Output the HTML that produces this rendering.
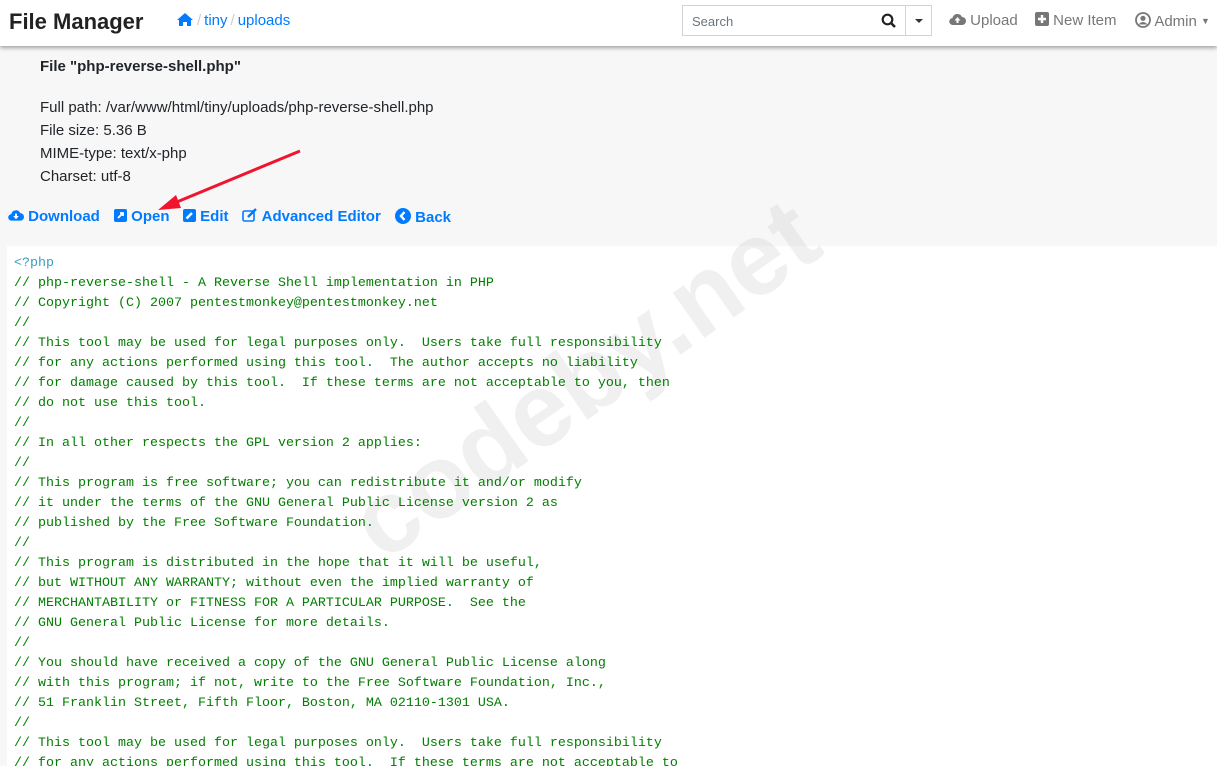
<!DOCTYPE html>
<html><head><meta charset="utf-8"><style>
*{margin:0;padding:0;box-sizing:border-box}
body{width:1217px;height:761px;overflow:hidden;background:#f7f7f7;font-family:"Liberation Sans",sans-serif;position:relative}
.nav{position:absolute;left:0;top:0;width:1217px;height:46px;background:#fff;box-shadow:0 2px 4px rgba(0,0,0,.35);z-index:3}
.brand{position:absolute;left:9px;top:9px;font-size:22px;font-weight:bold;color:#222}
.crumb{position:absolute;left:176px;top:12px;font-size:15px;color:#007bff}
.crumb .s{color:#ccc;margin:0 3px}
.search{position:absolute;left:682px;top:5px;width:250px;height:31px;border:1px solid #ced4da;background:#fff}
.search span{position:absolute;left:9px;top:8px;font-size:13px;color:#6c757d}
.search .dd{position:absolute;left:222px;top:0;width:1px;height:29px;background:#ced4da}
.nl{position:absolute;top:12px;font-size:15px;color:#777}
.a{color:#007bff;font-weight:bold;font-size:15px;position:absolute;top:208px;z-index:2}
.info{position:absolute;left:40px;font-size:15px;color:#212529}
.code{position:absolute;left:7px;top:246px;width:1210px;height:520px;background:#fff;overflow:hidden}
pre{position:relative;z-index:2;font-family:"Liberation Mono",monospace;font-size:13.33px;line-height:20px;color:#008000;padding:8px 0 0 7px}
.wm{position:absolute;font-size:104px;font-weight:bold;color:rgba(200,200,200,.28);transform:rotate(-35deg);transform-origin:0 0;white-space:nowrap;z-index:1;left:329px;top:486px}
</style></head><body>
<div class="nav">
<div class="brand">File Manager</div>
<div class="crumb"><svg width="18" height="15" viewBox="0 0 18 15" style="vertical-align:-2px"><path d="M9 1 L1 8 L3 8 L3 14 L7 14 L7 10 L11 10 L11 14 L15 14 L15 8 L17 8 Z" fill="#007bff"/></svg><span class="s">/</span>tiny<span class="s">/</span>uploads</div>
<div class="search"><span>Search</span>
<svg style="position:absolute;left:198px;top:7px" width="16" height="16" viewBox="0 0 16 16"><circle cx="6.5" cy="6.5" r="4.8" fill="none" stroke="#222" stroke-width="2.2"/><path d="M10 10 L14 14" stroke="#222" stroke-width="2.6"/></svg>
<div class="dd"></div>
<svg style="position:absolute;left:232px;top:13px" width="8" height="5"><path d="M0 0 L8 0 L4 4Z" fill="#333"/></svg></div>
<div class="nl" style="left:949px"><svg width="17" height="13" viewBox="0 0 17 13" style="vertical-align:-1px"><path d="M4 12 A3.5 3.5 0 0 1 3.5 5 A5 5 0 0 1 13 4 A4 4 0 0 1 13 12Z" fill="#777"/><path d="M8.5 4 L5.5 7.5 L7.5 7.5 L7.5 10 L9.5 10 L9.5 7.5 L11.5 7.5Z" fill="#fff"/></svg> Upload</div>
<div class="nl" style="left:1035px"><svg width="14" height="14" style="vertical-align:-1px"><rect width="14" height="14" rx="2" fill="#777"/><path d="M7 3V11M3 7H11" stroke="#fff" stroke-width="2.4"/></svg> New Item</div>
<div class="nl" style="left:1135px"><svg width="16" height="16" viewBox="0 0 16 16" style="vertical-align:-2px"><circle cx="8" cy="8" r="7" fill="none" stroke="#777" stroke-width="1.8"/><circle cx="8" cy="6.3" r="2.6" fill="#777"/><path d="M3.5 12.5 Q8 7.5 12.5 12.5" fill="#777"/></svg> Admin <span style="font-size:9px;vertical-align:2px">▼</span></div>
</div>
<div class="info" style="top:58px;font-weight:bold">File "php-reverse-shell.php"</div>
<div class="info" style="top:99px">Full path: /var/www/html/tiny/uploads/php-reverse-shell.php</div>
<div class="info" style="top:122px">File size: 5.36 B</div>
<div class="info" style="top:145px">MIME-type: text/x-php</div>
<div class="info" style="top:168px">Charset: utf-8</div>
<div class="a" style="left:8px"><svg width="16" height="13" viewBox="0 0 17 13" style="vertical-align:-1px"><path d="M4 12 A3.5 3.5 0 0 1 3.5 5 A5 5 0 0 1 13 4 A4 4 0 0 1 13 12Z" fill="#007bff"/><path d="M8.5 10.5 L5.5 7 L7.5 7 L7.5 4.5 L9.5 4.5 L9.5 7 L11.5 7Z" fill="#fff"/></svg> Download</div>
<div class="a" style="left:114px"><svg width="13" height="13" style="vertical-align:-1px"><rect width="13" height="13" rx="2" fill="#007bff"/><path d="M4 9L9 4M6 4H9V7" stroke="#fff" stroke-width="1.8" fill="none"/></svg> Open</div>
<div class="a" style="left:183px"><svg width="13" height="13" style="vertical-align:-1px"><rect width="13" height="13" rx="2" fill="#007bff"/><path d="M3.5 9.5L9 4" stroke="#fff" stroke-width="2.4"/></svg> Edit</div>
<div class="a" style="left:242px"><svg width="16" height="14" style="vertical-align:-1px"><rect x="1" y="3" width="11" height="10" rx="1.5" fill="none" stroke="#007bff" stroke-width="1.6"/><path d="M6 9L14 1" stroke="#007bff" stroke-width="2.4"/></svg> Advanced Editor</div>
<div class="a" style="left:395px"><svg width="16" height="16" style="vertical-align:-2px"><circle cx="8" cy="8" r="8" fill="#007bff"/><path d="M9.5 4L6 8L9.5 12" stroke="#fff" stroke-width="2.4" fill="none"/></svg> Back</div>
<svg style="position:absolute;left:0;top:0;z-index:4" width="400" height="230"><path d="M300 151 L172 204" stroke="#f0142e" stroke-width="3"/><path d="M158 210 L176 195 L181 208Z" fill="#f0142e"/></svg>
<div class="code"><pre><span style="color:#3c9dbf">&lt;?php</span>
// php-reverse-shell - A Reverse Shell implementation in PHP
// Copyright (C) 2007 pentestmonkey@pentestmonkey.net
//
// This tool may be used for legal purposes only.  Users take full responsibility
// for any actions performed using this tool.  The author accepts no liability
// for damage caused by this tool.  If these terms are not acceptable to you, then
// do not use this tool.
//
// In all other respects the GPL version 2 applies:
//
// This program is free software; you can redistribute it and/or modify
// it under the terms of the GNU General Public License version 2 as
// published by the Free Software Foundation.
//
// This program is distributed in the hope that it will be useful,
// but WITHOUT ANY WARRANTY; without even the implied warranty of
// MERCHANTABILITY or FITNESS FOR A PARTICULAR PURPOSE.  See the
// GNU General Public License for more details.
//
// You should have received a copy of the GNU General Public License along
// with this program; if not, write to the Free Software Foundation, Inc.,
// 51 Franklin Street, Fifth Floor, Boston, MA 02110-1301 USA.
//
// This tool may be used for legal purposes only.  Users take full responsibility
// for any actions performed using this tool.  If these terms are not acceptable to
</pre></div>
<div class="wm">codeby.net</div>
</body></html>
